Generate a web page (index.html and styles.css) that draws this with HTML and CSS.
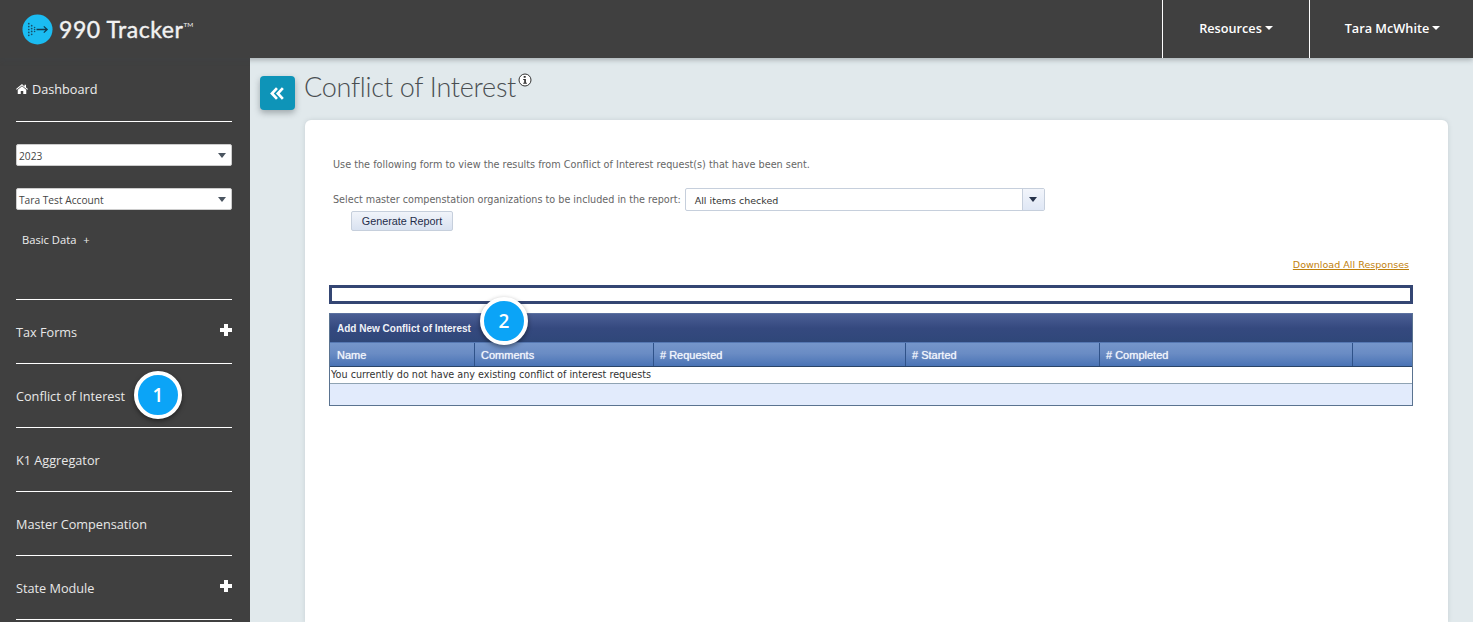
FILE: index.html
```html
<!DOCTYPE html>
<html lang="en">
<head>
<meta charset="UTF-8" />
<title>Conflict of Interest - 990 Tracker</title>
<link rel="stylesheet" href="styles.css">
</head>
<body>
  <header class="topbar">
    <div class="brand">
      <svg class="brand-icon" viewBox="0 0 32 32" aria-hidden="true">
        <circle cx="16" cy="16" r="15.5" fill="#1bbcf2"/>
        <g fill="#17506b">
          <circle cx="7" cy="10" r="0.9"/><circle cx="7" cy="13" r="0.9"/><circle cx="7" cy="16" r="0.9"/><circle cx="7" cy="19" r="0.9"/><circle cx="7" cy="22" r="0.9"/>
          <circle cx="10" cy="12" r="0.9"/><circle cx="10" cy="15" r="0.9"/><circle cx="10" cy="18" r="0.9"/><circle cx="10" cy="21" r="0.9"/>
          <circle cx="13" cy="14" r="0.8"/><circle cx="13" cy="16" r="0.8"/><circle cx="13" cy="18" r="0.8"/>
        </g>
        <path d="M15 16h11M22.5 12.8l3.5 3.2-3.5 3.2" fill="none" stroke="#123c52" stroke-width="1.3"/>
      </svg>
      <span class="brand-name">990 Tracker<sup>TM</sup></span>
    </div>
    <nav class="topnav">
      <a class="topnav-item topnav-resources">Resources<i class="caret"></i></a>
      <a class="topnav-item topnav-user">Tara McWhite<i class="caret"></i></a>
    </nav>
  </header>

  <div class="layout">
    <aside class="sidebar">
      <a class="side-dash">
        <svg class="home-icon" viewBox="0 0 24 20" aria-hidden="true">
          <path d="M12 0 0 10.2l1.3 1.5L12 2.8l10.700 8.900 1.300-1.500-4-3.400V1.500h-3v3.300zM12 4.600 3.500 11.700V20h6v-6h5v6h6v-8.300z" fill="#fff"/>
        </svg>
        Dashboard
      </a>
      <div class="side-filters">
        <div class="side-select">2023<i class="select-arrow"></i></div>
        <div class="side-select">Tara Test Account<i class="select-arrow"></i></div>
        <a class="side-sub">Basic Data <span class="side-sub-plus">+</span></a>
      </div>
      <a class="side-item">Tax Forms<i class="plus"></i></a>
      <a class="side-item side-item-badge">Conflict of Interest<span class="badge badge-one">1</span></a>
      <a class="side-item">K1 Aggregator</a>
      <a class="side-item">Master Compensation</a>
      <a class="side-item">State Module<i class="plus"></i></a>
    </aside>

    <main class="content">
      <div class="title-row">
        <button class="collapse-btn" aria-label="Collapse menu">
          <svg viewBox="0 0 14 12" aria-hidden="true">
            <path d="M6.500 1 1.800 6l4.700 5M12 1 7.300 6l4.700 5" fill="none" stroke="#fff" stroke-width="2.500"/>
          </svg>
        </button>
        <h1>Conflict of Interest</h1>
        <svg class="info-icon" viewBox="0 0 14 14" aria-hidden="true">
          <circle cx="7" cy="7" r="6" fill="#fff" stroke="#333" stroke-width="1"/>
          <path d="M5.700 3h2v1.700h-2zM5.200 6h2.700v3.700h1v1H5.200v-1h1V7h-1z" fill="#333"/>
        </svg>
      </div>

      <section class="card">
        <p class="intro">Use the following form to view the results from Conflict of Interest request(s) that have been sent.</p>
        <div class="org-row">
          <label class="org-label">Select master compenstation organizations to be included in the report:</label>
          <div class="combo">
            <span class="combo-text">All items checked</span>
            <span class="combo-btn"><i class="combo-arrow"></i></span>
          </div>
        </div>
        <button class="generate-btn">Generate Report</button>
        <div class="download-row"><a class="download-link">Download All Responses</a></div>
        <div class="empty-box"></div>

        <div class="grid">
          <div class="grid-title">Add New Conflict of Interest<span class="badge badge-two">2</span></div>
          <div class="grid-cols grid-head">
            <div>Name</div><div>Comments</div><div># Requested</div><div># Started</div><div># Completed</div><div></div>
          </div>
          <div class="grid-empty">You currently do not have any existing conflict of interest requests</div>
          <div class="grid-foot"></div>
        </div>
      </section>
    </main>
  </div>
</body>
</html>
```

FILE: styles.css
```css
* {
  box-sizing: border-box;
}

html, body {
  height: 100%;
}

body {
  margin: 0;
  overflow: hidden;
  display: flex;
  flex-direction: column;
  font-family: 'Open Sans', 'Liberation Sans', sans-serif;
  background: #e1e9ec;
}

/* top bar */
.topbar {
  position: relative;
  z-index: 2;
  flex: none;
  height: 58px;
  display: flex;
  justify-content: space-between;
  background: #404040;
  box-shadow: 0 2px 5px rgba(60, 70, 75, 0.35);
}

.brand {
  display: flex;
  align-items: center;
  padding-left: 22px;
  gap: 6px;
}

.brand-icon {
  width: 31px;
  height: 31px;
}

.brand-name {
  font-family: 'Lato', sans-serif;
  font-size: 23px;
  font-weight: 400;
  color: #f2f2f2;
  letter-spacing: 0.55px;
  -webkit-text-stroke: 0.4px #f2f2f2;
}

.brand-name sup {
  font-size: 6.500px;
  letter-spacing: 0;
  vertical-align: 11px;
  line-height: 0;
  -webkit-text-stroke: 0;
}

.topnav {
  display: flex;
}

.topnav-item {
  display: flex;
  align-items: center;
  justify-content: center;
  padding-bottom: 2px;
  border-left: 1px solid #fff;
  color: #fff;
  font-size: 12.700px;
  font-weight: 600;
}

.topnav-resources {
  width: 147px;
}

.topnav-user {
  width: 164px;
  padding-left: 2px;
}

.caret {
  margin-left: 3px;
  margin-top: -1px;
  border-left: 4.500px solid transparent;
  border-right: 4.500px solid transparent;
  border-top: 4.500px solid #fff;
}

.layout {
  flex: 1;
  display: flex;
  min-height: 0;
}

/* sidebar */
.sidebar {
  flex: none;
  width: 250px;
  padding: 0 18px 0 16px;
  background: #404040;
  color: #eee;
  font-size: 12.700px;
}

.side-dash {
  height: 64px;
  display: flex;
  align-items: center;
  gap: 4px;
  padding-bottom: 2px;
  border-bottom: 1px solid #fff;
  color: #eee;
}

.home-icon {
  width: 12px;
  height: 10px;
}

.side-filters {
  height: 178px;
  padding-top: 22px;
  border-bottom: 1px solid #fff;
}

.side-select {
  height: 22px;
  margin-bottom: 22px;
  padding: 2px 0 0 2px;
  display: flex;
  align-items: center;
  justify-content: space-between;
  background: #fff;
  border: 1px solid #ccc;
  border-radius: 2px;
  color: #444;
  font-size: 10.200px;
}

.select-arrow {
  margin: -2px 5px 0 0;
  border-left: 4px solid transparent;
  border-right: 4px solid transparent;
  border-top: 5px solid #4a5560;
}

.side-sub {
  display: block;
  margin-top: 2px;
  padding-left: 6px;
  font-size: 11.200px;
  color: #eee;
}

.side-sub-plus {
  margin-left: 4px;
}

.side-item {
  position: relative;
  height: 64px;
  display: flex;
  align-items: center;
  justify-content: space-between;
  border-bottom: 1px solid #fff;
  color: #e8e8e8;
}

.plus {
  position: relative;
  width: 12px;
  height: 12px;
  margin-top: -4px;
  background:
    linear-gradient(#fff, #fff) center / 12px 4px no-repeat,
    linear-gradient(#fff, #fff) center / 4px 12px no-repeat;
}

/* numbered callouts */
.badge {
  position: absolute;
  width: 48px;
  height: 48px;
  display: flex;
  align-items: center;
  justify-content: center;
  border: 4px solid #fff;
  border-radius: 50%;
  background: #0ba4f7;
  box-shadow: 0 2px 5px rgba(0, 0, 0, 0.45);
  color: #fff;
  font-family: 'Open Sans', sans-serif;
  font-size: 19px;
  font-weight: 600;
}

.badge-one {
  left: 118px;
  top: 7px;
}

.badge-two {
  left: 150px;
  top: -17px;
}

/* main area */
.content {
  flex: 1;
  min-width: 0;
  padding: 0 25px 0 55px;
  display: flex;
  flex-direction: column;
}

.title-row {
  position: relative;
  flex: none;
  height: 62px;
  display: flex;
  align-items: flex-start;
  padding-top: 10px;
}

.collapse-btn {
  position: absolute;
  left: -45px;
  top: 18px;
  width: 35px;
  height: 34px;
  padding: 0;
  display: flex;
  align-items: center;
  justify-content: center;
  border: none;
  border-radius: 4px;
  background: #0e94b8;
  box-shadow: 0 3px 6px rgba(60, 70, 75, 0.4);
}

.collapse-btn svg {
  width: 15px;
  height: 13px;
}

h1 {
  margin: 0 0 0 -1px;
  font-family: 'Lato', sans-serif;
  font-size: 27px;
  font-weight: 300;
  line-height: 37px;
  letter-spacing: -0.27px;
  color: #4a4f52;
}

.info-icon {
  width: 14px;
  height: 14px;
  margin: 5px 0 0 2px;
}

.card {
  flex: 1;
  padding: 38px 35px 0 24px;
  background: #fff;
  border-radius: 6px 6px 0 0;
  box-shadow: 0 0 4px rgba(120, 130, 135, 0.25);
  font-family: 'DejaVu Sans', sans-serif;
}

.intro {
  margin: 0 0 0 4px;
  font-size: 9.700px;
  line-height: 13px;
  color: #666;
}

.org-row {
  margin: 17px 0 0 4px;
  display: flex;
  align-items: center;
  gap: 4px;
}

.org-label {
  font-size: 9.650px;
  color: #666;
}

.combo {
  width: 360px;
  height: 23px;
  display: flex;
  border: 1px solid #c6cfdc;
  border-radius: 2px;
}

.combo-text {
  flex: 1;
  padding: 6px 0 0 9px;
  font-size: 9.500px;
  color: #333;
}

.combo-btn {
  width: 22px;
  display: flex;
  align-items: center;
  justify-content: center;
  border-left: 1px solid #c6cfdc;
  background: linear-gradient(#f2f5fb, #dfe7f5);
}

.combo-arrow {
  border-left: 4px solid transparent;
  border-right: 4px solid transparent;
  border-top: 5px solid #26324a;
}

.generate-btn {
  display: block;
  width: 102px;
  height: 20px;
  margin: 0 0 0 22px;
  padding: 0;
  border: 1px solid #c6cfdc;
  border-radius: 2px;
  background: linear-gradient(#f1f4fa, #d9e2f1);
  font-family: 'Liberation Sans', sans-serif;
  font-size: 10.800px;
  color: #1f2d4a;
}

.download-row {
  margin-top: 25px;
  padding-right: 4px;
  text-align: right;
  line-height: 14px;
}

.download-link {
  font-size: 9.550px;
  color: #bf800c;
  text-decoration: underline;
}

.empty-box {
  height: 19px;
  margin-top: 13px;
  border: 3px solid #344673;
}

/* results table */
.grid {
  margin-top: 9px;
  border: 1px solid #5a7390;
  border-top-color: #5c71a0;
}

.grid-title {
  position: relative;
  height: 28px;
  padding: 8px 0 0 7px;
  background: linear-gradient(#4a5e94 0, #35497f 50%, #2f4779 100%);
  font-family: 'Liberation Sans', sans-serif;
  font-size: 10px;
  font-weight: 700;
  line-height: 13px;
  color: #f0f2f8;
}

.grid-cols {
  display: grid;
  grid-template-columns: 145px 179px 252px 194px 253px 1fr;
}

.grid-head {
  height: 25px;
  border-top: 1px solid #5578b3;
  border-bottom: 1px solid #2a4468;
  background: linear-gradient(#7596cb 0, #6a8cc4 45%, #4a73b5 100%);
  font-family: 'Liberation Sans', sans-serif;
  font-size: 11px;
  font-weight: 400;
  color: #f2f5fb;
  text-shadow: 0 0 1px #e8eefa;
}

.grid-head div {
  padding: 6px 0 0 6px;
  border-right: 1px solid #2f5289;
}

.grid-head div:first-child {
  padding-left: 7px;
}

.grid-head div:last-child {
  border-right: none;
}

.grid-empty {
  height: 17px;
  padding-left: 1px;
  border-bottom: 1px solid #8fa3b3;
  font-size: 9.650px;
  line-height: 15px;
  color: #333;
}

.grid-foot {
  height: 21px;
  background: #e2ebfc;
}
```
